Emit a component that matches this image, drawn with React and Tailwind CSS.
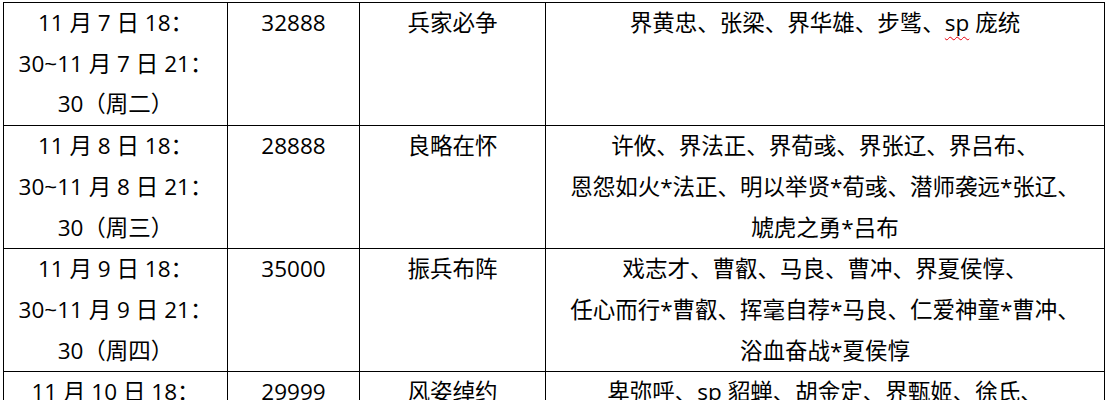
import React from "react";

const SP = () => (
  <span className="underline decoration-wavy decoration-red-600 decoration-[1px] underline-offset-[5px]">sp</span>
);

const rows = [
  {
    time: ["11 月 7 日 18：", "30~11 月 7 日 21：", "30（周二）"],
    price: "32888",
    name: "兵家必争",
    list: [<>界黄忠、张梁、界华雄、步骘、<SP /> 庞统</>],
  },
  {
    time: ["11 月 8 日 18：", "30~11 月 8 日 21：", "30（周三）"],
    price: "28888",
    name: "良略在怀",
    list: [
      "许攸、界法正、界荀彧、界张辽、界吕布、",
      "恩怨如火*法正、明以举贤*荀彧、潜师袭远*张辽、",
      "虓虎之勇*吕布",
    ],
  },
  {
    time: ["11 月 9 日 18：", "30~11 月 9 日 21：", "30（周四）"],
    price: "35000",
    name: "振兵布阵",
    list: [
      "戏志才、曹叡、马良、曹冲、界夏侯惇、",
      "任心而行*曹叡、挥毫自荐*马良、仁爱神童*曹冲、",
      "浴血奋战*夏侯惇",
    ],
  },
  {
    time: ["11 月 10 日 18：", "30~11 月 10 日 21：", "30（周五）"],
    price: "29999",
    name: "风姿绰约",
    list: [<>卑弥呼、<SP /> 貂蝉、胡金定、界甄姬、徐氏、</>, "倾国倾城*貂蝉、洛神赋*甄姬", "巾帼英雄*徐氏"],
  },
];

function Lines({ items }) {
  return (
    <>
      {items.map((t, i) => (
        <div key={i} className="whitespace-nowrap">{t}</div>
      ))}
    </>
  );
}

export default function App() {
  return (
    <div
      className="bg-white text-[#000] pt-[2px] pl-[3px]"
      style={{ fontFamily: '"Open Sans", "Noto Sans CJK SC", sans-serif' }}
    >
      <table className="table-fixed border-collapse w-[1101px] text-[22.5px] leading-[40.7px]">
        <colgroup>
          <col className="w-[224px]" />
          <col className="w-[132px]" />
          <col className="w-[186px]" />
          <col className="w-[559px]" />
        </colgroup>
        <tbody>
          {rows.map((r, i) => (
            <tr key={i} className="h-[123px]">
              <td className="border-[1.5px] border-black align-top text-center p-0">
                <Lines items={r.time} />
              </td>
              <td className="border-[1.5px] border-black align-top text-center p-0">
                {r.price}
              </td>
              <td className="border-[1.5px] border-black align-top text-center p-0">
                {r.name}
              </td>
              <td className="border-[1.5px] border-black align-top text-center p-0">
                <Lines items={r.list} />
              </td>
            </tr>
          ))}
        </tbody>
      </table>
    </div>
  );
}
